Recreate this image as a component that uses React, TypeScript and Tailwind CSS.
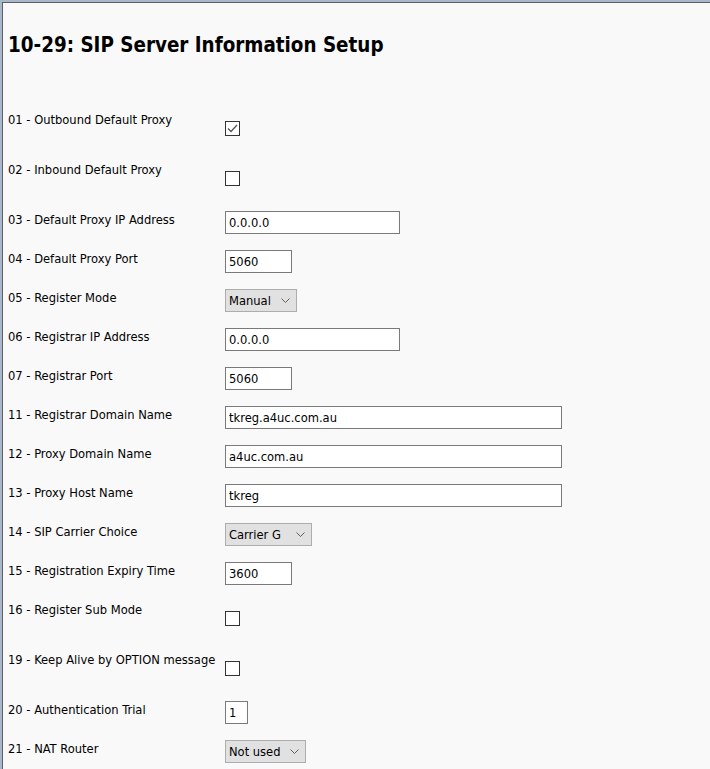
import React from "react";

type Row =
  | { n: string; label: string; kind: "check"; checked: boolean }
  | { n: string; label: string; kind: "text"; value: string; w: string }
  | { n: string; label: string; kind: "select"; value: string; w: string };

const rows: Row[] = [
  { n: "01", label: "Outbound Default Proxy", kind: "check", checked: true },
  { n: "02", label: "Inbound Default Proxy", kind: "check", checked: false },
  { n: "03", label: "Default Proxy IP Address", kind: "text", value: "0.0.0.0", w: "w-[175px]" },
  { n: "04", label: "Default Proxy Port", kind: "text", value: "5060", w: "w-[67px]" },
  { n: "05", label: "Register Mode", kind: "select", value: "Manual", w: "w-[72px]" },
  { n: "06", label: "Registrar IP Address", kind: "text", value: "0.0.0.0", w: "w-[175px]" },
  { n: "07", label: "Registrar Port", kind: "text", value: "5060", w: "w-[67px]" },
  { n: "11", label: "Registrar Domain Name", kind: "text", value: "tkreg.a4uc.com.au", w: "w-[337px]" },
  { n: "12", label: "Proxy Domain Name", kind: "text", value: "a4uc.com.au", w: "w-[337px]" },
  { n: "13", label: "Proxy Host Name", kind: "text", value: "tkreg", w: "w-[337px]" },
  { n: "14", label: "SIP Carrier Choice", kind: "select", value: "Carrier G", w: "w-[87px]" },
  { n: "15", label: "Registration Expiry Time", kind: "text", value: "3600", w: "w-[67px]" },
  { n: "16", label: "Register Sub Mode", kind: "check", checked: false },
  { n: "19", label: "Keep Alive by OPTION message", kind: "check", checked: false },
  { n: "20", label: "Authentication Trial", kind: "text", value: "1", w: "w-[23px]" },
  { n: "21", label: "NAT Router", kind: "select", value: "Not used", w: "w-[81px]" },
];

function Control({ row }: { row: Row }) {
  if (row.kind === "check") {
    return (
      <div className="mt-[10px] w-[15px] h-[15px] border border-[#333333] bg-white flex items-center justify-center">
        {row.checked && (
          <svg width="11" height="9" viewBox="0 0 11 9" fill="none">
            <path d="M1 4.5 L4 7.5 L10 1" stroke="#555555" strokeWidth="1.3" />
          </svg>
        )}
      </div>
    );
  }
  if (row.kind === "text") {
    return (
      <div className={`${row.w} h-[23px] border border-[#7a7a7a] bg-white pl-[3px] leading-[21px] text-black whitespace-nowrap overflow-hidden`}>
        {row.value}
      </div>
    );
  }
  return (
    <div className={`${row.w} h-[23px] border border-[#adadad] bg-[#e1e1e1] pl-[3px] pr-[6px] flex items-center justify-between text-black`}>
      <span className="leading-[21px]">{row.value}</span>
      <svg width="9" height="5" viewBox="0 0 9 5" fill="none">
        <path d="M0.5 0.5 L4.5 4.5 L8.5 0.5" stroke="#606060" strokeWidth="1" />
      </svg>
    </div>
  );
}

export default function App() {
  return (
    <div className="h-screen overflow-hidden bg-[#f9f9f9] border-t-2 border-l-2 border-[#a9b8cc] font-['DejaVu_Sans_Condensed','DejaVu_Sans',sans-serif] [font-stretch:condensed]">
      <div className="h-full border-t border-l border-[#5f5f5f] pl-[5px]">
        <h1 className="mt-[30px] text-[20.4px] leading-[24px] font-bold text-black">
          10-29: SIP Server Information Setup
        </h1>
        <div className="mt-[54px] flex flex-col text-[12.8px] leading-[16px] text-black">
          {rows.map((r) => (
            <div key={r.n} className={`flex items-start ${r.kind === "check" ? "h-[50px]" : "h-[39px]"}`}>
              <div className="w-[217px] shrink-0 whitespace-nowrap pt-[1px]">
                {r.n} - {r.label}
              </div>
              <Control row={r} />
            </div>
          ))}
        </div>
      </div>
    </div>
  );
}
